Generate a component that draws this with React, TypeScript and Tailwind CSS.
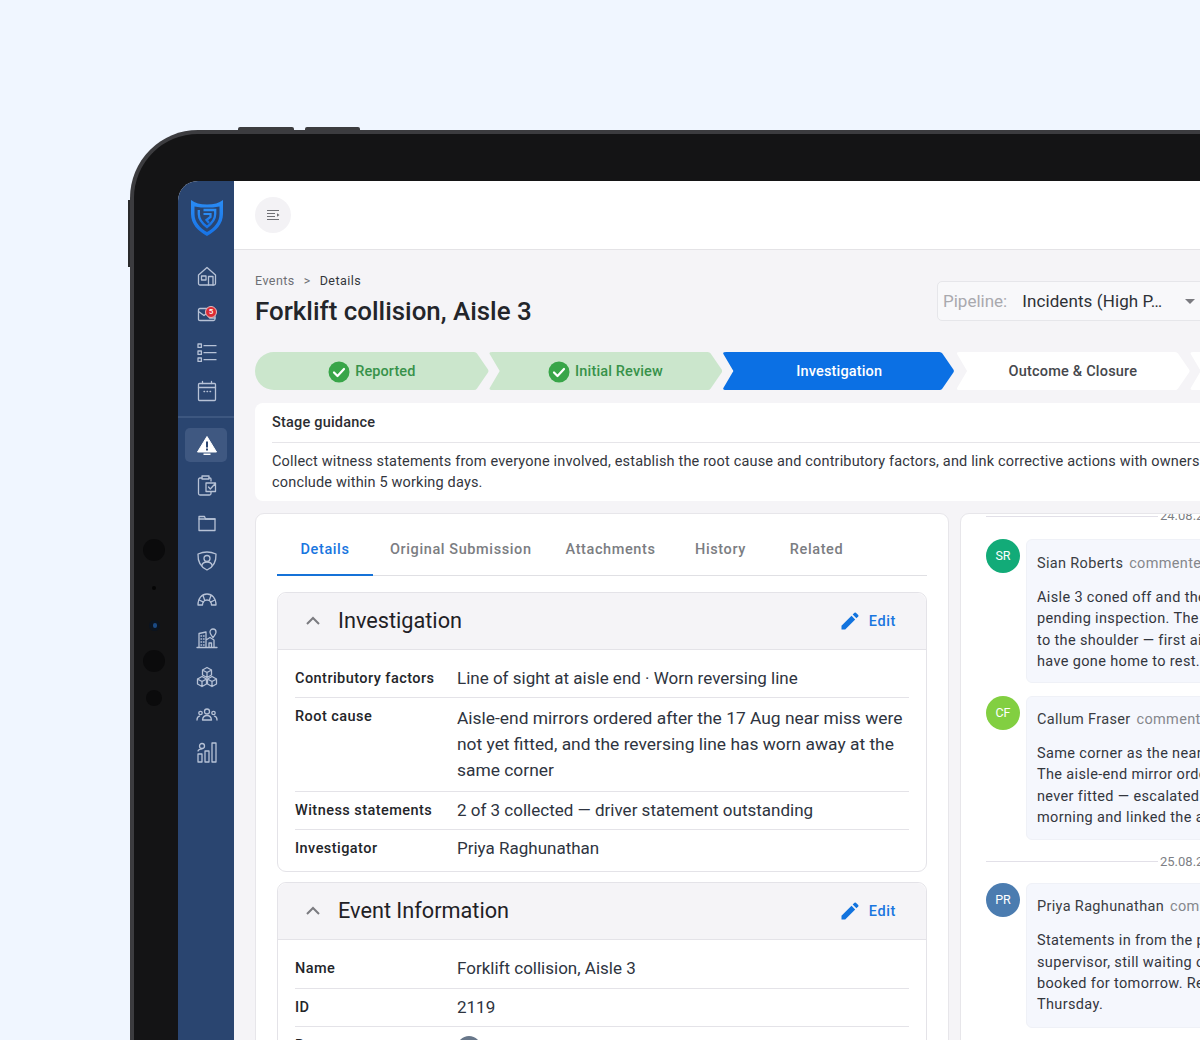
import React from "react";

const stroke = { fill: "none", stroke: "currentColor", strokeWidth: 1.3, strokeLinecap: "round" as const, strokeLinejoin: "round" as const };

function Ico({ children, size = 22 }: { children: React.ReactNode; size?: number }) {
  return (
    <svg width={size} height={size} viewBox="0 0 22 22" {...stroke}>
      {children}
    </svg>
  );
}

const icons: Record<string, React.ReactNode> = {
  home: (
    <Ico>
      <path d="M2.500 10 11 2.500l8.500 7.500v8.500a1.500 1.500 0 0 1-1.500 1.500H4a1.500 1.500 0 0 1-1.500-1.500z" />
      <rect x="5.500" y="11" width="4.500" height="4" />
      <path d="M12.500 20V11.500h4.500V20" />
    </Ico>
  ),
  inbox: (
    <Ico>
      <path d="M13 5.500H4Q2.500 5.500 2.500 7v9.500Q2.500 17.500 4 17.500h13.500Q19 17.500 19 16V10" />
      <path d="M2.500 8.500 8 12.500l2.500-2 3 4.500H19" />
    </Ico>
  ),
  list: (
    <Ico>
      <rect x="2" y="3" width="3.400" height="3.400" />
      <rect x="2" y="10" width="3.400" height="3.400" />
      <rect x="2" y="17" width="3.400" height="3.400" />
      <path d="M8 4.700h12M8 11.700h12M8 18.700h12" />
    </Ico>
  ),
  calendar: (
    <Ico>
      <rect x="2.500" y="3.500" width="17" height="17" rx="1" />
      <path d="M2.500 7.500h17M6.500 1.500v2M15.500 1.500v2M8 11.500h.6M11 11.500h.6M14 11.500h.6" />
    </Ico>
  ),
  clip: (
    <Ico>
      <path d="M6 4H4a1.500 1.500 0 0 0-1.500 1.500v14A1.500 1.500 0 0 0 4 21h9.500a1.500 1.500 0 0 0 1.500-1.500V18" />
      <path d="M6 5V2h7v3z" />
      <path d="M13 4h1a1 1 0 0 1 1 1v2M10 9h9.500v8.500H10zM12.500 13l1.800 2 5-5.500" />
    </Ico>
  ),
  folder: (
    <Ico>
      <path d="M3 5V18.500h16V7H9.500L8.500 4.500H3z" />
      <path d="M3 7h16" />
    </Ico>
  ),
  shield: (
    <Ico>
      <path d="M11 2c3 0 6 .7 9 2 .3 6.500-2.500 13-9 16C4.500 17 1.700 10.500 2 4c3-1.300 6-2 9-2z" />
      <circle cx="11" cy="8.500" r="3" />
      <path d="M5.800 15.500c.6-2.500 2.500-3.500 5.200-3.500s4.600 1 5.200 3.500" />
    </Ico>
  ),
  gauge: (
    <Ico>
      <path d="M2 17c0-7 4-11 9-11s9 4 9 11h-4.500c0-3-2-5-4.500-5s-4.500 2-4.500 5z" />
      <path d="M7 7.500 8.800 12.500M15 7.500l-1.800 5M3.200 12l4.300 2.200M18.800 12l-4.300 2.200" />
    </Ico>
  ),
  city: (
    <Ico>
      <path d="M1 20.500h20M3 20.500V6.500l7-1.500v15.500M10 13l4-2.500 4 2.500v7.500" />
      <path d="M5 9h.6M7.500 9h.6M5 12h.6M7.500 12h.6M5 15h.6M7.500 15h.6M5 18h.6M7.500 18h.6M13 20v-4h2.500v4" />
      <path d="M17 10.500c-2-2.500-3-3.800-3-5.500a3 3 0 0 1 6 0c0 1.700-1 3-3 5.500z" />
    </Ico>
  ),
  cubes: (
    <Ico>
      <path d="M11 1.500l4.500 2.500v5L11 11.500 6.500 9V4zM6.500 4 11 6.500 15.500 4M11 6.500v5" />
      <path d="M6 10.500 10.500 13v5L6 20.500 1.500 18v-5zM1.500 13 6 15.500 10.500 13M6 15.500v5" />
      <path d="M16 10.500 20.500 13v5L16 20.500 11.500 18v-5zM11.500 13l4.500 2.500 4.500-2.500M16 15.500v5" />
    </Ico>
  ),
  people: (
    <Ico>
      <circle cx="11" cy="7.500" r="2.500" />
      <path d="M6.500 16c.3-3 2-4.500 4.500-4.500s4.200 1.500 4.500 4.500z" />
      <circle cx="4.500" cy="9" r="1.700" />
      <circle cx="17.500" cy="9" r="1.700" />
      <path d="M1 16c0-2 .8-3.300 2.500-3.800M21 16c0-2-.8-3.300-2.500-3.800" />
    </Ico>
  ),
  chart: (
    <Ico>
      <rect x="2" y="13" width="4" height="8" />
      <rect x="9" y="10" width="4" height="11" />
      <rect x="16" y="2" width="4" height="19" />
      <circle cx="6" cy="5" r="2.500" />
      <path d="M2 10c.5-1.500 2-2.200 4-2.200" />
    </Ico>
  ),
};

function NavItem({ name, h = "h-[38.5px]" }: { name: string; h?: string }) {
  return (
    <div className={`flex w-full items-center justify-center pl-[1px] text-[#b7c2d6] ${h}`}>
      {icons[name]}
    </div>
  );
}

function Logo() {
  return (
    <svg width="32" height="36" viewBox="0 0 32 36">
      <defs>
        <linearGradient id="lg" x1="0" y1="0" x2="0" y2="1">
          <stop offset="0" stopColor="#2a8cf5" />
          <stop offset="1" stopColor="#1773e6" />
        </linearGradient>
      </defs>
      <path d="M0 0C4 3 9 4.500 16 4.500S28 3 32 0V14C32 24 25 31 16 36 7 31 0 24 0 14z" fill="url(#lg)" />
      <path d="M3.500 6.500C8 7.500 12 7.500 16 7.500s8 0 12.500-1V14C28.500 22 23 28 16 32 9 28 3.500 22 3.500 14z" fill="#2a4570" />
      <path d="M7.800 10V14C7.800 20 12 24 16 27 20 24 24.200 20 24.200 14V10H12.500" fill="none" stroke="url(#lg)" strokeWidth="2.300" />
      <path d="M12.500 14H19.500V17L15.500 20 18 23" fill="none" stroke="url(#lg)" strokeWidth="2.200" />
    </svg>
  );
}

function Check() {
  return (
    <svg width="22" height="22" viewBox="0 0 22 22">
      <circle cx="11" cy="11" r="10.500" fill="#38a548" />
      <path d="M6 11.500l3.500 3.500L16 8" fill="none" stroke="#fff" strokeWidth="2.200" strokeLinecap="round" strokeLinejoin="round" />
    </svg>
  );
}

function Chevron() {
  return (
    <svg width="16" height="10" viewBox="0 0 16 10" fill="none" stroke="#7b7b80" strokeWidth="2">
      <path d="M2 8l6-6 6 6" />
    </svg>
  );
}

function Pencil() {
  return (
    <svg width="18" height="18" viewBox="0 0 18 18" fill="#1273de">
      <path d="M0.500 13.800V17.500H4.200L14.200 7.500 10.500 3.800z" />
      <path d="M17.200 4.500a1 1 0 0 0 0-1.400L14.900.800a1 1 0 0 0-1.400 0l-1.800 1.800 3.700 3.700z" />
    </svg>
  );
}

function Section({ title, children }: { title: string; children: React.ReactNode }) {
  return (
    <section className="rounded-[9px] border border-[#e4e3e8] bg-white">
      <header className="flex h-[57px] items-center rounded-t-[9px] border-b border-[#e4e3e8] bg-[#f5f4f7] pl-[27px] pr-[30px]">
        <Chevron />
        <h2 className="ml-[17px] flex-1 text-[21.7px] font-normal text-[#1f2125]">{title}</h2>
        <Pencil />
        <span className="ml-[10px] mt-[2px] text-[14.5px] font-medium tracking-[0.6px] text-[#1976e0]">Edit</span>
      </header>
      <div className="px-[17px]">{children}</div>
    </section>
  );
}

function Row({ label, h, last, valueCls, labelCls, children }: { label: string; h: string; last?: boolean; valueCls: string; labelCls: string; children: React.ReactNode }) {
  return (
    <div className={`flex items-start ${h} ${last ? "" : "border-b border-[#e4e3e8]"}`}>
      <div className={`w-[162px] shrink-0 text-[14.5px] font-medium leading-[20px] tracking-[0.45px] text-[#232529] ${labelCls}`}>{label}</div>
      <div className={`leading-[26px] text-[#2e3440] ${valueCls}`}>{children}</div>
    </div>
  );
}

function Step({ label, kind, shape, done, track }: { label: string; kind: string; shape: string; done?: boolean; track: string }) {
  return (
    <div className={`flex h-[38px] w-[233.7px] shrink-0 items-center justify-center gap-[5px] pt-[2px] text-[14.5px] font-medium ${track} ${kind} ${shape}`}>
      {done && <Check />}
      <span>{label}</span>
    </div>
  );
}

function DateLine({ date, cls }: { date: string; cls: string }) {
  return (
    <div className={`flex items-center ${cls}`}>
      <div className="h-px w-[172px] bg-[#e2e0e8]" />
      <span className="ml-[2px] whitespace-nowrap text-[13px] text-[#7d7f85]">{date}</span>
    </div>
  );
}

function Comment({ initials, color, name, action, lines, cls, bubble }: { initials: string; color: string; name: string; action: string; lines: string[]; cls: string; bubble: string }) {
  return (
    <div className={`flex w-[400px] items-start gap-[6px] ${cls}`}>
      <div className={`flex h-[34px] w-[34px] shrink-0 items-center justify-center rounded-full text-[12.5px] text-white ${color}`}>{initials}</div>
      <div className={`flex-1 rounded-[6px] border border-[#eff1f7] bg-[#f5f7fd] px-[10px] ${bubble}`}>
        <div className="whitespace-nowrap text-[14.5px] leading-[21px] tracking-[0.34px] text-[#3a3d42]">
          {name} <span className="ml-[2px] text-[#85878c]">{action}</span>
        </div>
        <div className="mt-[13px] text-[14.5px] leading-[21.3px] tracking-[0.35px] text-[#33363d]">
          {lines.map((l) => (
            <div key={l} className="whitespace-nowrap">{l}</div>
          ))}
        </div>
      </div>
    </div>
  );
}

export default function App() {
  return (
    <div className="h-[1040px] w-[1200px] overflow-hidden bg-[#f0f6ff] pl-[130px] pt-[130px] font-['Roboto',sans-serif]">
      <div className="relative h-[1000px] w-[1200px] rounded-tl-[68px] border-l-[4px] border-t-[4px] border-[#3c3c3f] bg-[#141415] pl-[44px] pt-[47px]">
        <div className="absolute -top-[7px] left-[104px] h-[3px] w-[56px] rounded-t-[2px] bg-[#3c3c3f]" />
        <div className="absolute -top-[7px] left-[171px] h-[3px] w-[55px] rounded-t-[2px] bg-[#3c3c3f]" />
        <div className="absolute -left-[6px] top-[66px] h-[67px] w-[2px] bg-[#2a2a2c]" />
        <div className="absolute left-[9px] top-[405px] h-[22px] w-[22px] rounded-full bg-[#0b0b0c]" />
        <div className="absolute left-[18px] top-[452px] h-[4px] w-[4px] rounded-full bg-[#050505]" />
        <div className="absolute left-[15px] top-[486px] flex h-[11px] w-[11px] items-center justify-center rounded-full bg-[#0b1420]">
          <div className="h-[5px] w-[4px] rounded-full bg-[#1a4a85]" />
        </div>
        <div className="absolute left-[9px] top-[516px] h-[22px] w-[22px] rounded-full bg-[#0b0b0c]" />
        <div className="absolute left-[12px] top-[556px] h-[16px] w-[16px] rounded-full bg-[#0b0b0c]" />

        <div className="flex h-[952px] overflow-hidden rounded-tl-[20px] bg-[#f5f4f7]">
          <aside className="flex w-[56px] shrink-0 flex-col items-center bg-[#2a4570]">
            <div className="mt-[19px] flex h-[36px] items-center justify-center pl-[1px]">
              <Logo />
            </div>
            <div className="mt-[21px] w-full">
              <NavItem name="home" h="h-[38px]" />
              <div className="relative">
                <NavItem name="inbox" h="h-[37px]" />
                <div className="absolute left-[27px] top-[11px] flex h-[12px] w-[12px] items-center justify-center rounded-full border border-[#e8b9bd] bg-[#dd2c35] text-[8px] font-medium leading-none text-white">5</div>
              </div>
              <NavItem name="list" h="h-[39px]" />
              <NavItem name="calendar" h="h-[40px]" />
            </div>
            <div className="mt-[5px] h-[2px] w-full bg-[#3d5780]" />
            <div className="mt-[10px] flex h-[34px] w-[42px] items-center justify-center rounded-[5px] bg-[#3f5881] pl-[1px]">
              <svg width="20" height="20" viewBox="0 -1 20 20">
                <path d="M10 .5 19.500 16H.5z" fill="#fff" stroke="#fff" strokeLinejoin="round" />
                <path d="M6.500 17.500h7v1.500h-7z" fill="#fff" />
                <rect x="9" y="5.500" width="2" height="6" fill="#2a4570" />
                <rect x="9" y="12.500" width="2" height="2" fill="#2a4570" />
              </svg>
            </div>
            <div className="mt-[3px] w-full">
              <NavItem name="clip" h="h-[39px]" />
              <NavItem name="folder" h="h-[38px]" />
              <NavItem name="shield" h="h-[38px]" />
              <NavItem name="gauge" h="h-[38px]" />
              <NavItem name="city" h="h-[39px]" />
              <NavItem name="cubes" h="h-[39px]" />
              <NavItem name="people" h="h-[38px]" />
              <NavItem name="chart" h="h-[36px]" />
            </div>
          </aside>

          <main className="min-w-0 flex-1">
            <div className="flex h-[69px] items-center border-b border-[#e4e3e6] bg-white pb-[1px] pl-[21px]">
              <button className="flex h-[36px] w-[36px] items-center justify-center rounded-full bg-[#f3f2f5]">
                <svg width="13" height="12" viewBox="0 0 13 12" fill="none" stroke="#6f7075" strokeWidth="1.100">
                  <path d="M0 1.500h12M0 4.500h8M0 7.500h8M0 10.500h12" />
                  <path d="M10 4.200l2.500 1.800L10 7.800z" fill="#6f7075" stroke="none" />
                </svg>
              </button>
            </div>

            <div className="pl-[21px]">
              <div className="flex h-[102px] items-start">
                <div className="w-[682px] shrink-0">
                  <div className="mt-[23px] flex items-center text-[12.5px] leading-[16px] tracking-[0.45px]">
                    <span className="text-[#6d6f74]">Events</span>
                    <span className="mx-[9px] text-[#6d6f74]">&gt;</span>
                    <span className="text-[#33363b]">Details</span>
                  </div>
                  <h1 className="mt-[6px] text-[25.9px] font-medium leading-[32px] text-[#23252a]">Forklift collision, Aisle 3</h1>
                </div>
                <div className="mt-[31px] flex h-[40px] w-[300px] shrink-0 items-center rounded-[5px] border border-[#e6e6ea] bg-[#f8f8fa] pl-[5px]">
                  <span className="mt-[2px] text-[17px] text-[#a9a9ae]">Pipeline:</span>
                  <span className="ml-[15px] mt-[2px] w-[163px] whitespace-nowrap text-[17px] tracking-[0.1px] text-[#2e3136]">Incidents (High P…</span>
                  <span className="h-0 w-0 border-x-[5px] border-t-[5px] border-x-transparent border-t-[#7b7b80]" />
                </div>
              </div>

              <div className="flex">
                <Step label="Reported" done track="tracking-[0.1px]" kind="bg-[#cbe6cc] text-[#37924a]" shape="[clip-path:path('M19_0H219Q221_0_222_1.500L233_17.500Q234_19_233_20.500L222_36.500Q221_38_219_38H19A19_19_0_0_1_19_0Z')]" />
                <Step label="Initial Review" done track="tracking-[0.15px]" kind="bg-[#cbe6cc] text-[#37924a]" shape="[clip-path:path('M4_0H219Q221_0_222_1.500L233_17.500Q234_19_233_20.500L222_36.500Q221_38_219_38H4Q0_38_1_36L11_19L1_2Q0_0_4_0Z')]" />
                <Step label="Investigation" track="tracking-[0.15px]" kind="bg-[#0b70e4] text-white" shape="[clip-path:path('M4_0H217Q219_0_220_1.500L231_17.500Q232_19_231_20.500L220_36.500Q219_38_217_38H4Q0_38_1_36L11_19L1_2Q0_0_4_0Z')]" />
                <Step label="Outcome & Closure" track="tracking-[0.2px]" kind="bg-white text-[#45474c]" shape="[clip-path:path('M4_0H219Q221_0_222_1.500L233_17.500Q234_19_233_20.500L222_36.500Q221_38_219_38H4Q0_38_1_36L11_19L1_2Q0_0_4_0Z')]" />
                <Step label="" track="" kind="bg-white" shape="[clip-path:path('M4_0H219Q221_0_222_1.500L233_17.500Q234_19_233_20.500L222_36.500Q221_38_219_38H4Q0_38_1_36L11_19L1_2Q0_0_4_0Z')]" />
              </div>

              <div className="mt-[13px] w-[1000px] rounded-[8px] bg-white pl-[17px]">
                <div className="flex h-[40px] items-center border-b border-[#e6e5e9] text-[14.5px] font-medium tracking-[0.2px] text-[#2b2d32]">Stage guidance</div>
                <p className="h-[58px] whitespace-nowrap pt-[8px] text-[14.5px] leading-[21px] tracking-[0.17px] text-[#33363d]">
                  Collect witness statements from everyone involved, establish the root cause and contributory factors, and link corrective actions with owners
                  <br />
                  conclude within 5 working days.
                </p>
              </div>

              <div className="mt-[12px] flex items-start gap-[11px]">
                <div className="h-[560px] w-[694px] shrink-0 rounded-[9px] border border-[#e7e6ea] bg-white px-[21px]">
                  <nav className="flex h-[62px] border-b border-[#e0e0e4] text-[14.5px] font-medium tracking-[0.6px] text-[#7b7d82]">
                    <div className="-mb-px flex w-[96px] items-center justify-center border-b-2 border-[#1572d8] pt-[12px] text-[#1976e0]">Details</div>
                    <div className="-mb-px flex items-center justify-center border-b-2 border-transparent px-[17px] pt-[12px]">Original Submission</div>
                    <div className="-mb-px flex items-center justify-center border-b-2 border-transparent px-[17px] pt-[12px]">Attachments</div>
                    <div className="-mb-px flex min-w-[96px] items-center justify-center border-b-2 border-transparent px-[17px] pt-[12px]">History</div>
                    <div className="-mb-px flex min-w-[96px] items-center justify-center border-b-2 border-transparent px-[17px] pt-[12px]">Related</div>
                  </nav>
                  <div className="mt-[16px] flex flex-col gap-[10px]">
                    <Section title="Investigation">
                      <Row label="Contributory factors" h="h-[48px]" valueCls="pt-[15px] text-[17px]" labelCls="pt-[19px]">Line of sight at aisle end · Worn reversing line</Row>
                      <Row label="Root cause" h="h-[94px]" valueCls="pt-[7px] text-[17.4px]" labelCls="pt-[9px]">
                        Aisle-end mirrors ordered after the 17 Aug near miss were
                        <br />
                        not yet fitted, and the reversing line has worn away at the
                        <br />
                        same corner
                      </Row>
                      <Row label="Witness statements" h="h-[38px]" valueCls="pt-[5px] text-[17px]" labelCls="pt-[9px]">2 of 3 collected — driver statement outstanding</Row>
                      <Row label="Investigator" h="h-[41px]" last valueCls="pt-[5px] text-[17px]" labelCls="pt-[9px]">Priya Raghunathan</Row>
                    </Section>
                    <Section title="Event Information">
                      <Row label="Name" h="h-[49px]" valueCls="pt-[15px] text-[17px]" labelCls="pt-[19px]">Forklift collision, Aisle 3</Row>
                      <Row label="ID" h="h-[38px]" valueCls="pt-[5px] text-[17px]" labelCls="pt-[9px]">2119</Row>
                      <Row label="Reporter" h="h-[39px]" last valueCls="pt-[9px]" labelCls="pt-[9px]">
                        <div className="h-[24px] w-[24px] rounded-full bg-[#68778a]" />
                      </Row>
                    </Section>
                  </div>
                </div>

                <div className="h-[560px] w-[400px] shrink-0 overflow-hidden rounded-[9px] border border-[#e7e6ea] bg-white pl-[25px]">
                  <DateLine date="24.08.2025" cls="-mt-[6px] h-[16px]" />
                  <Comment cls="mt-[15px]" bubble="pt-[13px] pb-[10px]" initials="SR" color="bg-[#12ab78]" name="Sian Roberts" action="commented" lines={["Aisle 3 coned off and the truck", "pending inspection. The driver", "to the shoulder — first aid", "have gone home to rest."]} />
                  <Comment cls="mt-[13px]" bubble="pt-[12px] pb-[11px]" initials="CF" color="bg-[#82cf41]" name="Callum Fraser" action="commented" lines={["Same corner as the near miss", "The aisle-end mirror order was", "never fitted — escalated this", "morning and linked the action"]} />
                  <DateLine date="25.08.2025" cls="mt-[13px] h-[16px]" />
                  <Comment cls="mt-[14px]" bubble="pt-[12px] pb-[11px]" initials="PR" color="bg-[#4b7cb0]" name="Priya Raghunathan" action="commented" lines={["Statements in from the picker", "supervisor, still waiting on the", "booked for tomorrow. Report", "Thursday."]} />
                </div>
              </div>
            </div>
          </main>
        </div>
      </div>
    </div>
  );
}
